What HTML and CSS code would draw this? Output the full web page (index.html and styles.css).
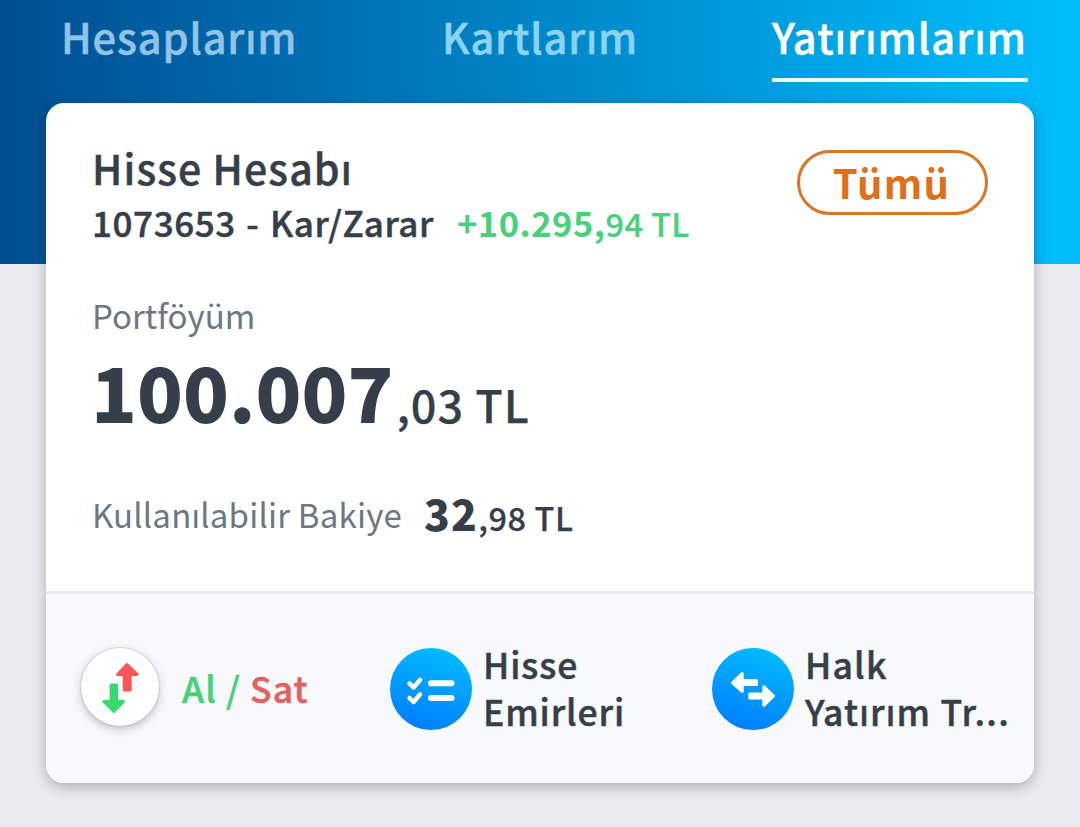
FILE: index.html
```html
<!DOCTYPE html>
<html lang="tr">
<head>
<meta charset="utf-8">
<title>Yatırımlarım</title>
<link rel="stylesheet" href="styles.css">
</head>
<body>
<nav class="tabs">
  <a class="tab tab-accounts">Hesaplarım</a>
  <a class="tab tab-cards">Kartlarım</a>
  <a class="tab tab-active">Yatırımlarım</a>
</nav>
<main class="card">
  <section class="summary">
    <div class="top">
      <div>
        <h1 class="title">Hisse Hesabı</h1>
        <p class="profit"><span class="account">1073653 - Kar/Zarar</span><span class="gain"><b class="gain-whole">+10.295,</b><span class="gain-cents">94 TL</span></span></p>
      </div>
      <button class="all">Tümü</button>
    </div>
    <p class="label">Portföyüm</p>
    <p class="total"><b class="total-whole">100.007</b><span class="total-cents">,03 TL</span></p>
    <p class="available"><span class="available-label">Kullanılabilir Bakiye</span><b class="available-whole">32</b><span class="available-cents">,98 TL</span></p>
  </section>
  <footer class="actions">
    <a class="action">
      <svg class="icon icon-trade" viewBox="0 0 78 78">
        <g stroke-width="3" stroke-linejoin="round">
          <path fill="#fb5757" stroke="#fb5757" d="M46 16.500L56.200 26.500H49.200V42H43.200V26.500H36.500Z"/>
          <path fill="#36da6e" stroke="#36da6e" d="M32.800 63.500L22.800 53.500H30.100V37H35.700V53.500H42.500Z"/>
        </g>
      </svg>
      <span class="trade"><span class="buy">Al /</span> <span class="sell">Sat</span></span>
    </a>
    <a class="action">
      <svg class="icon" viewBox="0 0 82 82">
        <defs><linearGradient id="blue" x1=".65" y1="0" x2=".35" y2="1"><stop offset="0" stop-color="#00bcff"/><stop offset="1" stop-color="#007dff"/></linearGradient></defs>
        <circle cx="41" cy="41" r="41" fill="url(#blue)"/>
        <g fill="none" stroke="#fff" stroke-linecap="round" stroke-linejoin="round">
          <path stroke-width="4.500" d="M19.500 35.500L23.500 39.500L30 32M19.500 50L23.500 54L30 46.500"/>
          <path stroke-width="6" d="M41 35.300H61.500M41 50H61.500"/>
        </g>
      </svg>
      <span class="action-text">Hisse<br>Emirleri</span>
    </a>
    <a class="action">
      <svg class="icon" viewBox="0 0 82 82">
        <circle cx="41" cy="41" r="41" fill="url(#blue)"/>
        <g fill="#fff" stroke="#fff" stroke-width="3" stroke-linejoin="round">
          <path d="M20.500 34.800L30.200 25.500V32.500H44.500V36.500H30.200V43.500Z"/>
          <path d="M61.500 48L51.800 38.700V46H37.800V50H51.800V57.300Z"/>
        </g>
      </svg>
      <span class="action-text ipo">Halk<br>Yatırım Tr...</span>
    </a>
  </footer>
</main>
</body>
</html>
```
FILE: styles.css
```css
* { box-sizing: border-box; }
body {
  margin: 0;
  height: 827px;
  overflow: hidden;
  font-family: "Noto Sans CJK SC", "Noto Sans", sans-serif;
  font-weight: 500;
  color: #363f49;
  background: linear-gradient(90deg, #004f93 0, #005295 40px, #0084c5 520px, #00a9e9 870px, #00bcf9 1060px) 0 0 / 100% 264px no-repeat #ebecf1;
}
h1, p { margin: 0; font-weight: 500; }
.tabs, .title, .account, .action { -webkit-text-stroke: .5px currentColor; }
.total-cents, .available-cents { -webkit-text-stroke: .25px currentColor; }
.tabs {
  display: grid;
  grid-template-columns: 381px 329px 256px;
  height: 103px;
  padding-left: 62px;
  font-size: 41.5px;
  line-height: 72px;
  letter-spacing: .85px;
  white-space: nowrap;
}
.tab { height: 82px; margin-left: -1px; color: #8fc4e8; }
.tab-cards { color: #8bd3f5; }
.tab-active { margin-left: 0; letter-spacing: 1.15px; color: #fff; border-bottom: 4px solid #eaffff; }
.card {
  width: 988px;
  height: 680px;
  margin: 0 46px;
  border-radius: 18px;
  background: #fff;
  box-shadow: 0 4px 14px rgba(0, 0, 20, .27);
  overflow: hidden;
  white-space: nowrap;
}
.summary { height: 491px; padding: 39px 46px 0; border-bottom: 3px solid #e5ebf1; }
.top { display: flex; justify-content: space-between; }
.title { font-size: 41px; line-height: 51px; letter-spacing: 1.1px; }
.profit { display: flex; gap: 23px; font-size: 35px; line-height: 58px; letter-spacing: .6px; word-spacing: 2px; }
.gain { color: #46d17a; word-spacing: 0; }
.gain-whole { font-size: 34.5px; font-weight: 700; letter-spacing: .5px; }
.gain-cents { font-size: 32.5px; letter-spacing: .4px; -webkit-text-stroke: .2px currentColor; }
.all {
  width: 191px;
  height: 65px;
  margin-top: 8px;
  border: 3px solid #dc7624;
  border-radius: 33px;
  background: none;
  color: #df6f18;
  font: 700 40px/59px "Noto Sans CJK SC", "Noto Sans", sans-serif;
  letter-spacing: 1.2px;
  padding: 0 2px 2px 0;
}
.label { margin-top: 39px; font-size: 33px; line-height: 48px; letter-spacing: 0; font-weight: 400; color: #6c7780; }
.total { height: 98px; margin-left: -1px; line-height: 102px; }
.total-whole { font-size: 75.5px; font-weight: 900; }
.total-cents { margin-left: 3px; font-size: 45px; letter-spacing: 1px; }
.available { display: flex; align-items: baseline; margin-top: 43px; line-height: 60px; }
.available-label { margin-right: 22px; font-size: 33px; letter-spacing: .2px; font-weight: 400; color: #6c7780; }
.available-whole { position: relative; top: 3px; font-size: 42.5px; font-weight: 900; letter-spacing: 1.2px; }
.available-cents { position: relative; top: 3px; font-size: 32.5px; letter-spacing: .6px; }
.actions {
  display: grid;
  grid-template-columns: 310px 322px 1fr;
  height: 189px;
  padding: 49px 0 0 34px;
  background: #f8f9fb;
}
.action { display: flex; align-items: flex-start; font-size: 35.5px; letter-spacing: .9px; }
.icon { flex: none; width: 82px; height: 82px; margin-top: 5px; }
.icon-trade { width: 78px; height: 78px; margin-left: 1px; border-radius: 50%; background: #fff; box-shadow: 0 3px 10px rgba(30, 40, 60, .28), 0 0 0 1px #dfe1e6; }
.trade { margin-left: 23px; line-height: 90px; letter-spacing: 1.1px; }
.buy { color: #45d079; }
.sell { color: #e5605f; }
.action-text { margin: -3px 0 0 11px; line-height: 47px; }
.ipo { letter-spacing: 1.2px; }
```
